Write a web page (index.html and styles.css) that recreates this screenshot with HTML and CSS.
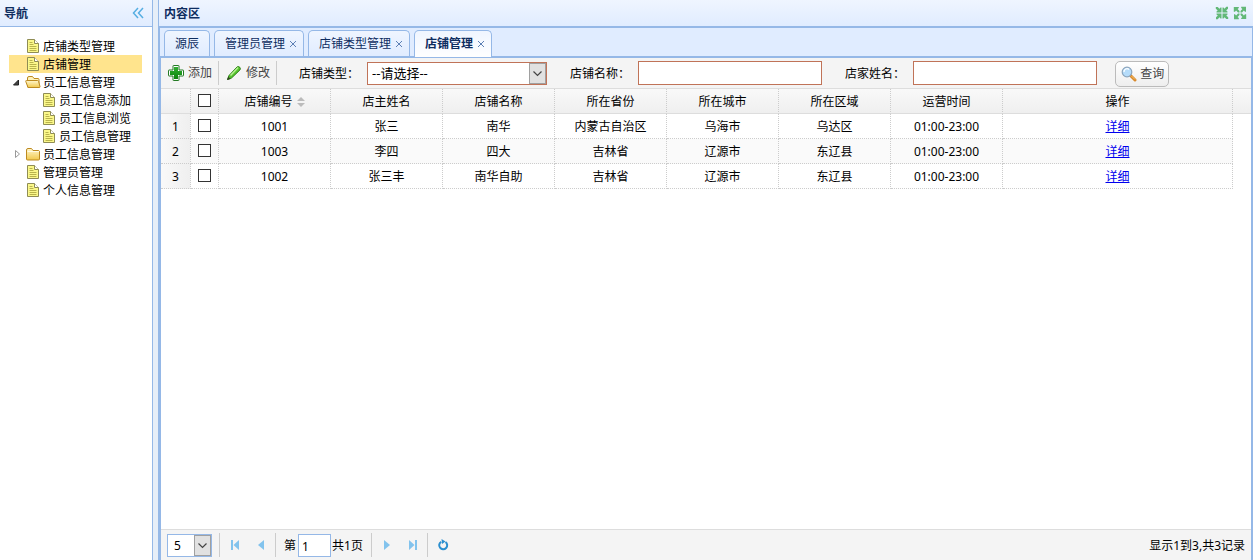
FILE: index.html
```html
<!DOCTYPE html>
<html lang="zh-CN">
<head>
<meta charset="utf-8">
<title>店铺管理</title>
<link rel="stylesheet" href="styles.css">
</head>
<body>
<svg class="defs" aria-hidden="true">
  <defs>
    <linearGradient id="folderFill" x1="0" y1="0" x2="0" y2="1"><stop offset="0" stop-color="#fff7cf"/><stop offset="1" stop-color="#f1c84b"/></linearGradient>
    <linearGradient id="plusFill" x1="0" y1="0" x2="0" y2="1"><stop offset="0" stop-color="#2fae2f"/><stop offset="1" stop-color="#0d840d"/></linearGradient>
    <symbol id="doc" viewBox="0 0 16 18">
      <path d="M2.500 2.500h7l4 4v9h-11z" fill="#fbf88a" stroke="#8f8c55"/>
      <path d="M9.500 2.500v4h4" fill="#fff" stroke="#8f8c55"/>
      <path d="M4.500 5.500h3M4.500 7.500h4M4.500 9.500h7M4.500 11.500h7M4.500 13.500h7" stroke="#b9b34c"/>
    </symbol>
    <symbol id="folder" viewBox="0 0 16 18">
      <path d="M1.500 14V5q0-1.500 1.500-1.500h3.500l1.500 2h5q1.500 0 1.500 1.500v7q0 1-1 1h-11q-1 0-1-1z" fill="url(#folderFill)" stroke="#bd8a20"/>
      <path d="M2.500 6.500h11.500" stroke="#fffbe5"/>
    </symbol>
    <symbol id="folder-open" viewBox="0 0 16 18">
      <path d="M2.500 14V5q0-1.500 1.500-1.500h3.500l1.500 2h4q1 0 1 1v8z" fill="#fff3bc" stroke="#bd8a20"/>
      <path d="M3 14.500L.800 8.500q-.300-1 .700-1h11q.800 0 1 .800l1.500 5.200q.200 1-.800 1z" fill="url(#folderFill)" stroke="#bd8a20"/>
    </symbol>
    <symbol id="chevron" viewBox="0 0 15 19"><path d="M3.500 7.500l4 4 4-4" fill="none" stroke="#444" stroke-width="1.200"/></symbol>
  </defs>
</svg>
<div class="layout">
  <aside class="west">
    <header class="panel-header">
      <h2 class="panel-title">导航</h2>
      <button class="icon-button" aria-label="折叠"><svg width="12" height="12" viewBox="0 0 12 12"><path d="M6 1L1.500 6 6 11M11 1L6.500 6 11 11" fill="none" stroke="#56aee2" stroke-width="1.500"/></svg></button>
    </header>
    <ul class="tree">
      <li class="node"><span class="hit"></span><svg class="tree-icon"><use href="#doc"/></svg>店铺类型管理</li>
      <li class="node selected"><span class="hit"></span><svg class="tree-icon"><use href="#doc"/></svg>店铺管理</li>
      <li class="node"><svg class="hit" viewBox="0 0 16 18"><path d="M9.500 7v5h-5z" fill="#444" stroke="#222"/></svg><svg class="tree-icon"><use href="#folder-open"/></svg>员工信息管理</li>
      <li class="node child"><span class="hit"></span><svg class="tree-icon"><use href="#doc"/></svg>员工信息添加</li>
      <li class="node child"><span class="hit"></span><svg class="tree-icon"><use href="#doc"/></svg>员工信息浏览</li>
      <li class="node child"><span class="hit"></span><svg class="tree-icon"><use href="#doc"/></svg>员工信息管理</li>
      <li class="node"><svg class="hit" viewBox="0 0 16 18"><path d="M6.500 5.500v7l4-3.500z" fill="#fff" stroke="#999"/></svg><svg class="tree-icon"><use href="#folder"/></svg>员工信息管理</li>
      <li class="node"><span class="hit"></span><svg class="tree-icon"><use href="#doc"/></svg>管理员管理</li>
      <li class="node"><span class="hit"></span><svg class="tree-icon"><use href="#doc"/></svg>个人信息管理</li>
    </ul>
  </aside>

  <main class="center">
    <header class="panel-header">
      <h2 class="panel-title">内容区</h2>
      <button class="icon-button" aria-label="收缩"><svg width="14" height="14" viewBox="0 0 14 14" fill="#62b877"><path id="inArrow" d="M6.500 1.500v5h-5v-1l1.200-1L.800 2.700V1h1.900l1.800 1.800 1-1.300z"/><use href="#inArrow" transform="rotate(90 7 7)"/><use href="#inArrow" transform="rotate(180 7 7)"/><use href="#inArrow" transform="rotate(270 7 7)"/></svg></button>
      <button class="icon-button" aria-label="展开"><svg width="14" height="14" viewBox="0 0 14 14" fill="#62b877"><path id="outArrow" d="M.800 1h5v1L4.600 3.100 6.500 5v1.500H5L3.100 4.600 2 5.800H.800z"/><use href="#outArrow" transform="rotate(90 7 7)"/><use href="#outArrow" transform="rotate(180 7 7)"/><use href="#outArrow" transform="rotate(270 7 7)"/></svg></button>
    </header>
    <div class="content">
      <nav class="tabs">
        <div class="tab"><button class="tab-label">源辰</button></div>
        <div class="tab"><button class="tab-label">管理员管理</button><button class="tab-close" aria-label="关闭"><svg width="8" height="8" viewBox="0 0 8 8"><path d="M1 1l6 6M7 1L1 7"/></svg></button></div>
        <div class="tab"><button class="tab-label">店铺类型管理</button><button class="tab-close" aria-label="关闭"><svg width="8" height="8" viewBox="0 0 8 8"><path d="M1 1l6 6M7 1L1 7"/></svg></button></div>
        <div class="tab active"><button class="tab-label">店铺管理</button><button class="tab-close" aria-label="关闭"><svg width="8" height="8" viewBox="0 0 8 8"><path d="M1 1l6 6M7 1L1 7"/></svg></button></div>
      </nav>
      <section class="grid-panel">
        <div class="toolbar">
          <button class="tool"><svg width="16" height="16" viewBox="0 0 16 16"><path d="M5.500.500h5q.500 0 .500.500v4h4q.500 0 .500.500v5q0 .500-.500.500h-4v4q0 .500-.500.500h-5q-.500 0-.500-.500v-4H1q-.500 0-.500-.500v-5Q.500 5 1 5h4V1q0-.500.500-.500z" fill="#fff" stroke="#247a24"/><path d="M6 2h4v4h4v4h-4v4H6v-4H2V6h4z" fill="url(#plusFill)"/></svg>添加</button>
          <span class="separator"></span>
          <button class="tool"><svg width="16" height="16" viewBox="0 0 16 16"><path d="M1.500 14.500L3 10.500 11 2q1.500-1 2.700.200 1.300 1.300.200 2.800L5.500 13z" fill="#55c52c" stroke="#2b7d16"/><path d="M4.500 10.500l7.500-8" stroke="#b5ef91" stroke-width="1.500"/><path d="M1 15l1.300-3.500L4.500 14z" fill="#31441f"/></svg>修改</button>
          <span class="separator"></span>
          <form class="search">
            <label for="type">店铺类型<span class="colon">：</span></label>
            <span class="combo"><select id="type"><option>--请选择--</option></select><svg class="combo-arrow"><use href="#chevron"/></svg></span>
            <label for="shop">店铺名称<span class="colon">：</span></label>
            <input class="field" id="shop" type="text">
            <label for="owner">店家姓名<span class="colon">：</span></label>
            <input class="field" id="owner" type="text">
            <button class="query" type="button"><svg width="16" height="16" viewBox="0 0 16 16"><path d="M9.500 9.500l4.500 4.500" stroke="#d8892b" stroke-width="3" stroke-linecap="round"/><path d="M10.500 10l3.500 3.500" stroke="#f7c26a"/><circle cx="6" cy="6" r="4.800" fill="#b5dcfa" stroke="#8ba5bd" stroke-width="1.200"/><path d="M3 6a3 3 0 0 1 5-2.500" fill="none" stroke="#fff" stroke-width="1.300"/></svg>查询</button>
          </form>
        </div>
        <div class="grid-view">
          <table class="datagrid">
            <colgroup><col class="col-number"><col class="col-check"><col class="col-data" span="7"><col class="col-action"><col></colgroup>
            <thead>
              <tr><th></th><th class="check"><input type="checkbox" aria-label="全选"></th><th>店铺编号<svg class="sort" width="8" height="10" viewBox="0 0 8 10"><path d="M0 4l4-4 4 4zM0 6h8l-4 4z" fill="#bbb"/></svg></th><th>店主姓名</th><th>店铺名称</th><th>所在省份</th><th>所在城市</th><th>所在区域</th><th>运营时间</th><th>操作</th><th class="filler"></th></tr>
            </thead>
            <tbody>
              <tr><td class="number">1</td><td class="check"><input type="checkbox" aria-label="选择1001"></td><td>1001</td><td>张三</td><td>南华</td><td>内蒙古自治区</td><td>乌海市</td><td>乌达区</td><td>01:00-23:00</td><td><a href="#">详细</a></td><td class="filler"></td></tr>
              <tr class="alt"><td class="number">2</td><td class="check"><input type="checkbox" aria-label="选择1003"></td><td>1003</td><td>李四</td><td>四大</td><td>吉林省</td><td>辽源市</td><td>东辽县</td><td>01:00-23:00</td><td><a href="#">详细</a></td><td class="filler"></td></tr>
              <tr><td class="number">3</td><td class="check"><input type="checkbox" aria-label="选择1002"></td><td>1002</td><td>张三丰</td><td>南华自助</td><td>吉林省</td><td>辽源市</td><td>东辽县</td><td>01:00-23:00</td><td><a href="#">详细</a></td><td class="filler"></td></tr>
            </tbody>
          </table>
        </div>
        <footer class="pager">
          <span class="combo page-size"><select aria-label="每页记录数"><option>5</option></select><svg class="combo-arrow"><use href="#chevron"/></svg></span>
          <span class="separator"></span>
          <button class="page-button" aria-label="首页"><svg width="10" height="10" viewBox="0 0 10 10"><path d="M1 0h2v10H1zM9 0v10L3.500 5z"/></svg></button>
          <button class="page-button" aria-label="上一页"><svg width="10" height="10" viewBox="0 0 10 10"><path d="M8 0v10L2 5z"/></svg></button>
          <span class="separator"></span>
          <label class="page-label" for="page">第</label>
          <input class="page-input" id="page" type="text" value="1">
          <span class="page-total">共1页</span>
          <span class="separator"></span>
          <button class="page-button" aria-label="下一页"><svg width="10" height="10" viewBox="0 0 10 10"><path d="M2 0v10l6-5z"/></svg></button>
          <button class="page-button" aria-label="末页"><svg width="10" height="10" viewBox="0 0 10 10"><path d="M1 0v10l5.500-5zM7 0h2v10H7z"/></svg></button>
          <span class="separator"></span>
          <button class="page-button" aria-label="刷新"><svg width="12" height="12" viewBox="0 0 12 12"><path d="M4.200 2.800A4 4 0 1 0 8.500 3" fill="none" stroke="#2b8fcf" stroke-width="2"/><path d="M4.500 0l4 2.500L5 5z" fill="#2b8fcf"/></svg></button>
          <span class="page-info">显示1到3,共3记录</span>
        </footer>
      </section>
    </div>
  </main>
</div>
</body>
</html>
```

FILE: styles.css
```css
* { box-sizing: border-box; }

body {
  margin: 0;
  color: #000;
  font: 12px/18px "Noto Sans", "Noto Sans CJK SC", sans-serif;
}

button, input, select { font: inherit; color: inherit; margin: 0; }

button {
  display: inline-flex;
  align-items: center;
  justify-content: center;
  padding: 0;
  border: 0;
  background: none;
}

svg { flex: none; }
.defs { position: absolute; width: 0; height: 0; }

.layout {
  display: flex;
  gap: 5px;
  height: 100vh;
  background: #e6eef8;
}

.west {
  flex: none;
  width: 153px;
  background: #fff;
  border-right: 1px solid #95b8e7;
}

.center {
  display: flex;
  flex: 1;
  flex-direction: column;
  min-width: 0;
  border-left: 1px solid #95b8e7;
}

.panel-header {
  display: flex;
  align-items: center;
  gap: 4px;
  height: 27px;
  padding: 0 6px 0 4px;
  border-bottom: 1px solid #95b8e7;
  background: linear-gradient(#eff5ff, #e0ecff);
}

.west .panel-header { padding-right: 8px; }
.center .panel-header { flex: none; padding-left: 5px; }

.panel-title {
  flex: 1;
  margin: 0;
  padding-top: 2px;
  color: #0e2d5f;
  font-size: 12px;
  line-height: 18px;
}

.tree { margin: 0; padding: 10px 10px 0 9px; list-style: none; }
.node { display: flex; height: 18px; line-height: 20px; white-space: nowrap; }
.node.selected { background: #ffe48d; }
.node.child { padding-left: 16px; }
.hit { flex: none; width: 16px; height: 18px; }
.tree-icon { width: 16px; height: 18px; margin-right: 2px; }

.content {
  display: flex;
  flex: 1;
  flex-direction: column;
  min-height: 0;
  border: 1px solid #95b8e7;
  border-bottom: 0;
}

.tabs {
  display: flex;
  flex: none;
  gap: 4px;
  height: 29px;
  padding: 2px 4px 0;
  border-bottom: 1px solid #95b8e7;
  background: #e0ecff;
}

.tab {
  display: flex;
  align-items: center;
  gap: 4px;
  height: 26px;
  padding: 0 6px 0 10px;
  border: 1px solid #95b8e7;
  border-bottom: 0;
  border-radius: 5px 5px 0 0;
  background: linear-gradient(#eff5ff, #e0ecff);
  color: #0e2d5f;
}

.tab:first-child { padding-right: 10px; }
.tab.active { height: 28px; padding-bottom: 2px; background: linear-gradient(#eff5ff, #fff); font-weight: bold; }
.tab-close { padding-top: 1px; }
.tab-close path { stroke: #5c80b5; stroke-width: 1; }

.grid-panel {
  display: flex;
  flex: 1;
  flex-direction: column;
  min-height: 0;
  border: 1px solid #95b8e7;
  border-bottom: 0;
  background: #fff;
}

.toolbar {
  display: flex;
  flex: none;
  align-items: center;
  height: 31px;
  padding-left: 7px;
  border-bottom: 1px solid #ddd;
  background: #f4f4f4;
  white-space: nowrap;
}

.tool { gap: 4px; color: #444; }
.tool + .separator { margin-left: 6px; }
.separator + .tool { margin-left: 7px; }
.separator { flex: none; width: 1px; height: 24px; background: #ccc; }

.search { display: flex; align-items: center; margin-left: 22px; }
.search label { margin-right: 8px; padding-top: 2px; }
.search .combo, .field { margin-right: 23px; }
.colon { font-family: "Noto Sans CJK TC", sans-serif; line-height: 1; }

.combo {
  display: block;
  position: relative;
  width: 180px;
  height: 23px;
  border: 1px solid #c07358;
  background: #fff;
}

.combo select {
  display: block;
  width: 100%;
  height: 100%;
  padding: 0 18px 0 4px;
  border: 0;
  background: #fff;
  appearance: none;
  font-size: 13px;
}

.combo-arrow {
  position: absolute;
  top: 0;
  right: 0;
  width: 17px;
  height: 21px;
  border: 1px solid #a0a0a0;
  background: #e1e1e1;
  pointer-events: none;
}

.field {
  width: 184px;
  height: 24px;
  padding: 0 4px;
  border: 1px solid #c07358;
  background: #fff;
}

.field + .query { margin-left: -5px; }

.query {
  gap: 3px;
  height: 26px;
  margin-top: 2px;
  padding: 0 4px 0 5px;
  border: 1px solid #bbb;
  border-radius: 5px;
  background: linear-gradient(#fff, #eee);
  color: #444;
}

.grid-view { flex: 1; min-height: 0; overflow: hidden; }

.datagrid { width: 100%; table-layout: fixed; border-spacing: 0; text-align: center; }
.col-number { width: 30px; }
.col-check { width: 28px; }
.col-data { width: 112px; }
.col-action { width: 230px; }

.datagrid th, .datagrid td {
  height: 25px;
  padding: 2px 0 0;
  border-right: 1px dotted #ccc;
  border-bottom: 1px dotted #ccc;
  white-space: nowrap;
}

.datagrid th {
  border-bottom: 1px solid #ddd;
  background: linear-gradient(#f9f9f9, #efefef);
  font-weight: normal;
}

.datagrid .check { padding: 0 0 1px; }
.datagrid .alt td { background: #fafafa; }
.datagrid tbody .number { background: linear-gradient(90deg, #f9f9f9, #efefef); }
.datagrid .filler { border-right: 0; }
.datagrid td.filler { border-bottom: 0; background: #fff; }
.datagrid a { color: #00e; }
.sort { margin-left: 4px; vertical-align: -1px; }

.datagrid input {
  display: block;
  width: 13px;
  height: 13px;
  margin: 0 auto;
  border: 1px solid #333;
  background: #fff;
  appearance: none;
}

.pager {
  display: flex;
  flex: none;
  align-items: center;
  height: 31px;
  padding: 0 6px;
  border-top: 1px solid #ddd;
  background: #f4f4f4;
  white-space: nowrap;
}

.pager .separator { margin: 0 2px 0 1px; }
.pager .page-size { width: 45px; margin-right: 6px; border-color: #95b8e7; }
.page-size select { padding: 2px 18px 0 6px; font-size: 12px; }
.page-button { width: 26px; height: 26px; }
.page-button svg { fill: #82c3ed; }
.page-label { margin: 0 2px 0 6px; padding-top: 2px; }

.page-input {
  width: 33px;
  height: 23px;
  padding: 2px 3px 0;
  border: 1px solid #95b8e7;
  background: #fff;
}

.page-total { margin: 0 7px 0 1px; padding-top: 2px; }
.page-info { margin-left: auto; padding-top: 2px; }
```
